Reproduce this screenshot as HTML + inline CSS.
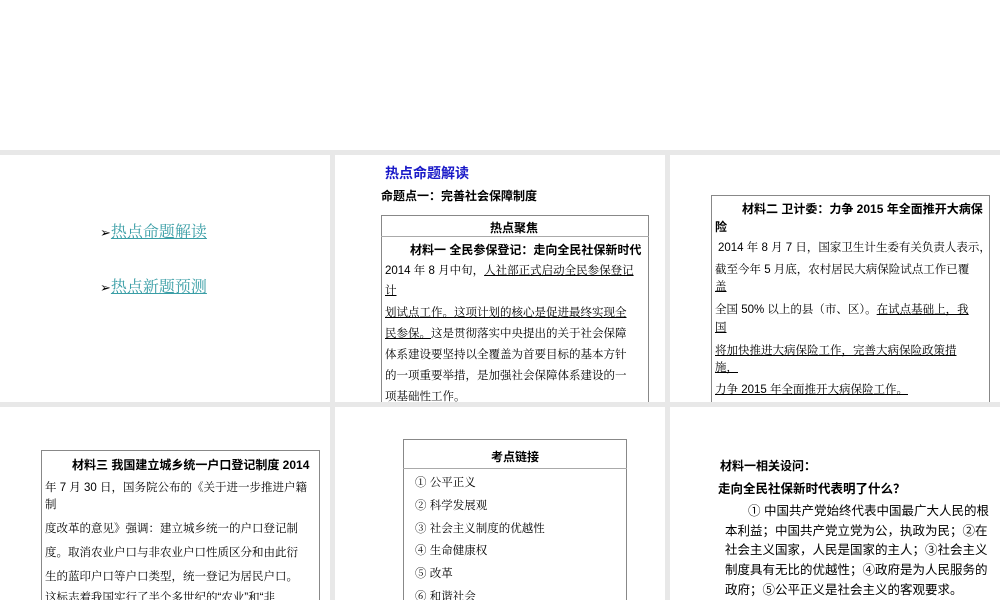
<!DOCTYPE html>
<html><head><meta charset="utf-8">
<style>
*{margin:0;padding:0;box-sizing:border-box}
html,body{overflow:hidden}
body{width:1000px;height:600px;background:#fff;position:relative;font-family:"Liberation Sans","Noto Sans CJK SC",sans-serif;color:#000}
.bg{position:absolute;left:0;top:150px;width:1000px;height:450px;background:#e8e8e8}
.p{position:absolute;background:#fff;overflow:hidden}
.t{position:absolute;white-space:nowrap;font-size:11.5px;line-height:14px}
.s{font-family:"Liberation Sans","Noto Serif CJK SC",serif}
.u{text-decoration:underline}
.b{font-weight:bold}
.box{position:absolute;border:1px solid #888}
</style></head><body>
<div class="bg"></div>
<div class="p" style="left:0;top:155px;width:330px;height:247px">
 <div class="t" style="left:100px;top:68px;font-size:16px;line-height:20px"><span style="font-size:13px;font-family:'DejaVu Sans',sans-serif">➢</span><span class="u" style="color:#3a9ea6;font-family:'Liberation Serif','Noto Serif CJK SC',serif">热点命题解读</span></div>
 <div class="t" style="left:100px;top:123px;font-size:16px;line-height:20px"><span style="font-size:13px;font-family:'DejaVu Sans',sans-serif">➢</span><span class="u" style="color:#3a9ea6;font-family:'Liberation Serif','Noto Serif CJK SC',serif">热点新题预测</span></div>
</div>
<div class="p" style="left:335px;top:155px;width:330px;height:247px">
 <div class="t b" style="left:50px;top:10px;font-size:14px;line-height:17px;color:#1a1ac8">热点命题解读</div>
 <div class="t b" style="left:46px;top:34px;font-size:12px">命题点一：完善社会保障制度</div>
 <div class="box" style="left:46px;top:60px;width:268px;height:200px"></div>
 <div style="position:absolute;left:46px;top:81px;width:268px;border-top:1px solid #aaa"></div>
 <div class="t b" style="left:155px;top:66px;font-size:12px">热点聚焦</div>
 <div class="t b" style="left:75px;top:88px;font-size:12px">材料一  全民参保登记：走向全民社保新时代</div>
 <div class="t s" style="left:50px;top:109px">2014 年 8 月中旬，<span class="u">人社部正式启动全民参保登记</span></div>
 <div class="t s u" style="left:50px;top:129px">计</div>
 <div class="t s" style="left:50px;top:151px"><span class="u">划试点工作。这项计划的核心是促进最终实现全</span></div>
 <div class="t s" style="left:50px;top:172px"><span class="u">民参保。</span>这是贯彻落实中央提出的关于社会保障</div>
 <div class="t s" style="left:50px;top:193px">体系建设要坚持以全覆盖为首要目标的基本方针</div>
 <div class="t s" style="left:50px;top:214px">的一项重要举措，是加强社会保障体系建设的一</div>
 <div class="t s" style="left:50px;top:235px">项基础性工作。</div>
</div>
<div class="p" style="left:670px;top:155px;width:330px;height:247px">
 <div class="box" style="left:41px;top:40px;width:279px;height:220px"></div>
 <div class="t b" style="left:72px;top:47px;font-size:12px">材料二  卫计委：力争 2015 年全面推开大病保</div>
 <div class="t b" style="left:45px;top:65px;font-size:12px">险</div>
 <div class="t s" style="left:48px;top:86px">2014 年 8 月 7 日，国家卫生计生委有关负责人表示，</div>
 <div class="t s" style="left:45px;top:108px">截至今年 5 月底，农村居民大病保险试点工作已覆</div>
 <div class="t s u" style="left:45px;top:125px">盖</div>
 <div class="t s" style="left:45px;top:148px">全国 50% 以上的县（市、区）。<span class="u">在试点基础上，我</span></div>
 <div class="t s u" style="left:45px;top:166px">国</div>
 <div class="t s u" style="left:45px;top:189px">将加快推进大病保险工作，完善大病保险政策措</div>
 <div class="t s u" style="left:45px;top:206px">施，</div>
 <div class="t s u" style="left:45px;top:228px">力争 2015 年全面推开大病保险工作。</div>
</div>
<div class="p" style="left:0;top:407px;width:330px;height:193px">
 <div class="box" style="left:41px;top:43px;width:279px;height:170px"></div>
 <div class="t b" style="left:72px;top:51px;font-size:12px">材料三  我国建立城乡统一户口登记制度  2014</div>
 <div class="t s" style="left:45px;top:74px">年 7 月 30 日，国务院公布的《关于进一步推进户籍</div>
 <div class="t s" style="left:45px;top:91px">制</div>
 <div class="t s" style="left:45px;top:115px">度改革的意见》强调：建立城乡统一的户口登记制</div>
 <div class="t s" style="left:45px;top:139px">度。取消农业户口与非农业户口性质区分和由此衍</div>
 <div class="t s" style="left:45px;top:163px">生的蓝印户口等户口类型，统一登记为居民户口。</div>
 <div class="t s" style="left:45px;top:184px">这标志着我国实行了半个多世纪的“农业”和“非</div>
</div>
<div class="p" style="left:335px;top:407px;width:330px;height:193px">
 <div class="box" style="left:68px;top:32px;width:224px;height:200px"></div>
 <div style="position:absolute;left:68px;top:61px;width:224px;border-top:1px solid #aaa"></div>
 <div class="t b" style="left:156px;top:43px;font-size:12px">考点链接</div>
 <div class="t s" style="left:80px;top:69px">① 公平正义</div>
 <div class="t s" style="left:80px;top:92px">② 科学发展观</div>
 <div class="t s" style="left:80px;top:115px">③ 社会主义制度的优越性</div>
 <div class="t s" style="left:80px;top:137px">④ 生命健康权</div>
 <div class="t s" style="left:80px;top:160px">⑤ 改革</div>
 <div class="t s" style="left:80px;top:183px">⑥ 和谐社会</div>
</div>
<div class="p" style="left:670px;top:407px;width:330px;height:193px">
 <div class="t b" style="left:50px;top:52px;font-size:12px">材料一相关设问：</div>
 <div class="t b" style="left:48px;top:75px;font-size:12.5px">走向全民社保新时代表明了什么？</div>
 <div class="t" style="left:78px;top:97px;font-size:12.5px">① 中国共产党始终代表中国最广大人民的根</div>
 <div class="t" style="left:55px;top:117px;font-size:12.5px">本利益；中国共产党立党为公，执政为民；②在</div>
 <div class="t" style="left:55px;top:136px;font-size:12.5px">社会主义国家，人民是国家的主人；③社会主义</div>
 <div class="t" style="left:55px;top:156px;font-size:12.5px">制度具有无比的优越性；④政府是为人民服务的</div>
 <div class="t" style="left:55px;top:176px;font-size:12.5px">政府；⑤公平正义是社会主义的客观要求。</div>
</div>
</body></html>
